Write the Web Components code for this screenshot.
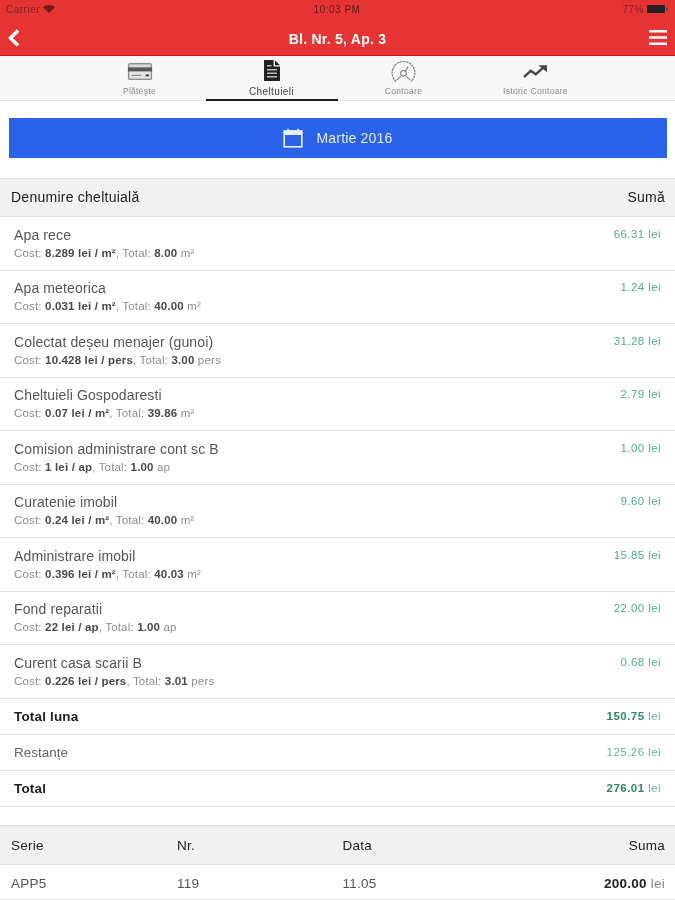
<!DOCTYPE html>
<html lang="ro">
<head>
<meta charset="utf-8">
<title>Cheltuieli</title>
<style>
html, body { margin: 0; height: 900px; overflow: hidden; background: #fff; }
body { font-family: "Liberation Sans", Arial, sans-serif; color: #333; filter: blur(.4px); }
</style>
</head>
<body>
<app-header title="Bl. Nr. 5, Ap. 3"></app-header>
<tab-bar>
  <tab-item label="Plăteşte" icon="card"></tab-item>
  <tab-item label="Cheltuieli" icon="doc" active></tab-item>
  <tab-item label="Contoare" icon="gauge"></tab-item>
  <tab-item label="Istoric Contoare" icon="trend"></tab-item>
</tab-bar>
<month-button>Martie 2016</month-button>
<table-head><span>Denumire cheltuială</span><span>Sumă</span></table-head>
<expense-row name="Apa rece" amount="66.31"><b>8.289 lei / m²</b>, Total: <b>8.00</b> m²</expense-row>
<expense-row name="Apa meteorica" amount="1.24"><b>0.031 lei / m²</b>, Total: <b>40.00</b> m²</expense-row>
<expense-row name="Colectat deșeu menajer (gunoi)" amount="31.28"><b>10.428 lei / pers</b>, Total: <b>3.00</b> pers</expense-row>
<expense-row name="Cheltuieli Gospodaresti" amount="2.79"><b>0.07 lei / m²</b>, Total: <b>39.86</b> m²</expense-row>
<expense-row name="Comision administrare cont sc B" amount="1.00"><b>1 lei / ap</b>, Total: <b>1.00</b> ap</expense-row>
<expense-row name="Curatenie imobil" amount="9.60"><b>0.24 lei / m²</b>, Total: <b>40.00</b> m²</expense-row>
<expense-row name="Administrare imobil" amount="15.85"><b>0.396 lei / m²</b>, Total: <b>40.03</b> m²</expense-row>
<expense-row name="Fond reparatii" amount="22.00"><b>22 lei / ap</b>, Total: <b>1.00</b> ap</expense-row>
<expense-row name="Curent casa scarii B" amount="0.68"><b>0.226 lei / pers</b>, Total: <b>3.01</b> pers</expense-row>
<total-row name="Total luna" amount="150.75" strong></total-row>
<total-row name="Restanțe" amount="125.26"></total-row>
<total-row name="Total" amount="276.01" strong></total-row>
<invoice-head></invoice-head>
<invoice-row serie="APP5" nr="119" data="11.05" suma="200.00"></invoice-row>

<script>
"use strict";

const ICONS = {
    card: `<svg width="26" height="19" viewBox="0 0 28 20" preserveAspectRatio="none"><rect x="1" y="1" width="26" height="18" rx="2" fill="#8e8e8e"/><rect x="2.5" y="2.5" width="23" height="3" fill="#d9d9d9"/><rect x="1" y="6" width="26" height="4" fill="#555"/><rect x="2.5" y="10" width="23" height="7.5" fill="#e4e4e4"/><rect x="5" y="13.5" width="10" height="1.2" fill="#888"/><rect x="20" y="13" width="3.5" height="2.2" fill="#444"/></svg>`,
    doc: `<svg width="18" height="23" viewBox="0 0 18 23"><path d="M1 1h9.6v6.6H17V22H1z" fill="#222"/><path d="M12 1.2L17 6.2H12z" fill="#222"/><path d="M4 6h4.5v1.4H4zM4 10h10v1.4H4zM4 13.5h10v1.4H4zM4 17h10v1.4H4z" fill="#bbb"/></svg>`,
    gauge: `<svg width="27" height="23" viewBox="0 0 28 25" fill="none" stroke="#777"><path d="M6 23.5A12.4 12.4 0 1 1 22 23.5" stroke-width="1.2" stroke-dasharray="2.6 .7"/><path d="M6.5 22l4.8-4.6M21.5 22l-4.8-4.6" stroke-width="1.1"/><circle cx="14" cy="14.5" r="3" stroke-width="1.1"/><path d="M15.5 12.5l3.5-5" stroke-width="1.2"/></svg>`,
    trend: `<svg width="25" height="15" viewBox="0 0 25 18" preserveAspectRatio="none"><path d="M1 15.5l6.8-7.3 5 4.2L21 3.5" fill="none" stroke="#444" stroke-width="2.6"/><path d="M15.5 1.5H24v8.5z" fill="#444"/></svg>`
};

class AppHeader extends HTMLElement {
    constructor() {
        super();
        this.attachShadow({mode: 'open'});
        this.shadowRoot.innerHTML = `<style>
:host { display: block; height: 55px; background: #e63434; border-bottom: 1px solid #dc0f14; color: #fff; }
.status { height: 18px; display: grid; grid-template-columns: 1fr auto 1fr; align-items: center; padding: 0 7px 0 6px; font-size: 10px; letter-spacing: .5px; color: #7d2226; }
.left { display: flex; align-items: center; gap: 3px; }
.right { display: flex; align-items: center; justify-content: flex-end; gap: 3px; }
.time { color: #5c1a1d; }
.bar { height: 37px; display: grid; grid-template-columns: 1fr auto 1fr; align-items: center; padding: 0 8px; }
h1 { margin: 4px 0 0; font-size: 14px; letter-spacing: .25px; font-weight: bold; }
.menu { justify-self: end; margin-top: 2px; }
.back { margin-top: 2px; }
</style>
<div class="status">
  <div class="left">Carrier <svg width="12" height="8" viewBox="0 0 12 8"><path d="M6 8L0 2.2C3.5-.6 8.5-.6 12 2.2z" fill="#6a1c1f"/></svg></div>
  <div class="time">10:03 PM</div>
  <div class="right">77% <svg width="21" height="8" viewBox="0 0 21 8"><rect width="18" height="8" rx="1" fill="#222"/><rect x="19" y="2.5" width="1.5" height="3" fill="#7d2226"/></svg></div>
</div>
<div class="bar">
  <svg class="back" width="12" height="18" viewBox="0 0 12 18"><path d="M10 1.5L2.5 9l7.5 7.5" fill="none" stroke="#fff" stroke-width="3.5"/></svg>
  <h1>${this.getAttribute('title')}</h1>
  <svg class="menu" width="18" height="15" viewBox="0 0 18 15"><path d="M0 1.3h18M0 7.5h18M0 13.7h18" stroke="#fff" stroke-width="2.6"/></svg>
</div>`;
    }
}

class TabBar extends HTMLElement {
    constructor() {
        super();
        this.attachShadow({mode: 'open'});
        this.shadowRoot.innerHTML = `<style>
:host { display: flex; justify-content: center; height: 44px; background: #f7f7f7; border-bottom: 1px solid #e2e2e2; box-sizing: content-box; }
</style><slot></slot>`;
    }
}

class TabItem extends HTMLElement {
    constructor() {
        super();
        this.attachShadow({mode: 'open'});
        let active = this.hasAttribute('active');
        this.shadowRoot.innerHTML = `<style>
:host { display: flex; flex-direction: column; align-items: center; width: 132px; height: 45px; box-sizing: border-box; border-bottom: 2px solid ${active ? '#1c1c1c' : 'transparent'}; }
.icon { height: 26px; margin-top: ${active ? '1px' : '2px'}; margin-bottom: ${active ? '4px' : '2px'}; display: flex; align-items: center; justify-content: center; }
.label { font-size: ${active ? '10px' : '8.5px'}; letter-spacing: ${active ? '.4px' : '.3px'}; color: ${active ? '#444' : '#8a8a8a'}; line-height: 10px; }
</style>
<div class="icon">${ICONS[this.getAttribute('icon')]}</div>
<div class="label">${this.getAttribute('label')}</div>`;
    }
}

class MonthButton extends HTMLElement {
    constructor() {
        super();
        this.attachShadow({mode: 'open'});
        this.shadowRoot.innerHTML = `<style>
:host { display: block; padding: 17px 8px 19.5px 9px; background: #fff; border-bottom: 1px solid #e4e4e4; }
.btn { height: 40px; background: #2a62ea; color: #e4ecff; display: flex; align-items: center; justify-content: center; gap: 13px; font-size: 14px; letter-spacing: .2px; }
</style>
<div class="btn">
  <svg width="20" height="20" viewBox="0 0 20 20" fill="none" stroke="#e8efff"><rect x="1.2" y="3" width="17.6" height="15.8" stroke-width="1.6"/><rect x="1.2" y="3" width="17.6" height="3.4" fill="#e8efff" stroke-width="1"/><path d="M5 .8v3M15 .8v3" stroke-width="1.6"/></svg>
  <slot></slot>
</div>`;
    }
}

class TableHead extends HTMLElement {
    constructor() {
        super();
        this.attachShadow({mode: 'open'});
        this.shadowRoot.innerHTML = `<style>
:host { display: flex; justify-content: space-between; align-items: center; height: 37.5px; padding: 0 10px 0 11px; background: #f1f1f1; border-bottom: 1px solid #dedede; font-size: 14px; letter-spacing: .25px; color: #222; }
</style><slot></slot>`;
    }
}

class ExpenseRow extends HTMLElement {
    constructor() {
        super();
        this.attachShadow({mode: 'open'});
        this.shadowRoot.innerHTML = `<style>
:host { display: flex; justify-content: space-between; box-sizing: border-box; height: 53.55px; padding: 9.5px 14px 0; background: #fff; border-bottom: 1px solid #e3e3e3; }
.name { font-size: 14px; line-height: 16px; color: #555; letter-spacing: .13px; }
.sub { font-size: 11.5px; line-height: 14px; margin-top: 3px; color: #8c8c8c; letter-spacing: .17px; }
.amount { font-size: 11.5px; line-height: 14px; color: #55a88a; letter-spacing: .43px; }
::slotted(b) { color: #4a4a4a; }
</style>
<div><div class="name">${this.getAttribute('name')}</div><div class="sub">Cost: <slot></slot></div></div>
<div class="amount">${this.getAttribute('amount')} lei</div>`;
    }
}

class TotalRow extends HTMLElement {
    constructor() {
        super();
        this.attachShadow({mode: 'open'});
        let strong = this.hasAttribute('strong');
        this.shadowRoot.innerHTML = `<style>
:host { display: flex; justify-content: space-between; align-items: center; box-sizing: border-box; height: 36px; padding: 0 14px; background: #fff; border-bottom: 1px solid #e3e3e3; }
.name { font-size: 13.5px; letter-spacing: ${strong ? '.17px' : '0'}; color: ${strong ? '#222' : '#666'}; font-weight: ${strong ? 'bold' : 'normal'}; }
.amount { font-size: 11.5px; letter-spacing: .45px; color: ${strong ? '#2a8a62' : '#6fb096'}; font-weight: ${strong ? 'bold' : 'normal'}; }
.unit { color: #6fb096; font-weight: normal; }
</style>
<div class="name">${this.getAttribute('name')}</div>
<div class="amount">${this.getAttribute('amount')} <span class="unit">lei</span></div>`;
    }
}

const INVOICE_STYLE = `
:host { display: grid; grid-template-columns: 166px 165.5px 1fr auto; align-items: center; box-sizing: border-box; padding: 0 10px 0 11px; font-size: 13.5px; letter-spacing: .25px; }
`;

class InvoiceHead extends HTMLElement {
    constructor() {
        super();
        this.attachShadow({mode: 'open'});
        this.shadowRoot.innerHTML = `<style>${INVOICE_STYLE}
:host { height: 40px; margin-top: 18px; padding-top: 1px; background: #f1f1f1; border-top: 1px solid #e3e3e3; border-bottom: 1px solid #dedede; color: #222; }
</style><div>Serie</div><div>Nr.</div><div>Data</div><div>Suma</div>`;
    }
}

class InvoiceRow extends HTMLElement {
    constructor() {
        super();
        this.attachShadow({mode: 'open'});
        this.shadowRoot.innerHTML = `<style>${INVOICE_STYLE}
:host { height: 35px; padding-top: 4px; background: #fff; border-bottom: 1px solid #e3e3e3; color: #555; }
b { color: #222; }
.unit { color: #888; }
</style><div>${this.getAttribute('serie')}</div><div>${this.getAttribute('nr')}</div><div>${this.getAttribute('data')}</div><div><b>${this.getAttribute('suma')}</b> <span class="unit">lei</span></div>`;
    }
}

customElements.define('app-header', AppHeader);
customElements.define('tab-bar', TabBar);
customElements.define('tab-item', TabItem);
customElements.define('month-button', MonthButton);
customElements.define('table-head', TableHead);
customElements.define('expense-row', ExpenseRow);
customElements.define('total-row', TotalRow);
customElements.define('invoice-head', InvoiceHead);
customElements.define('invoice-row', InvoiceRow);
</script>
</body>
</html>
